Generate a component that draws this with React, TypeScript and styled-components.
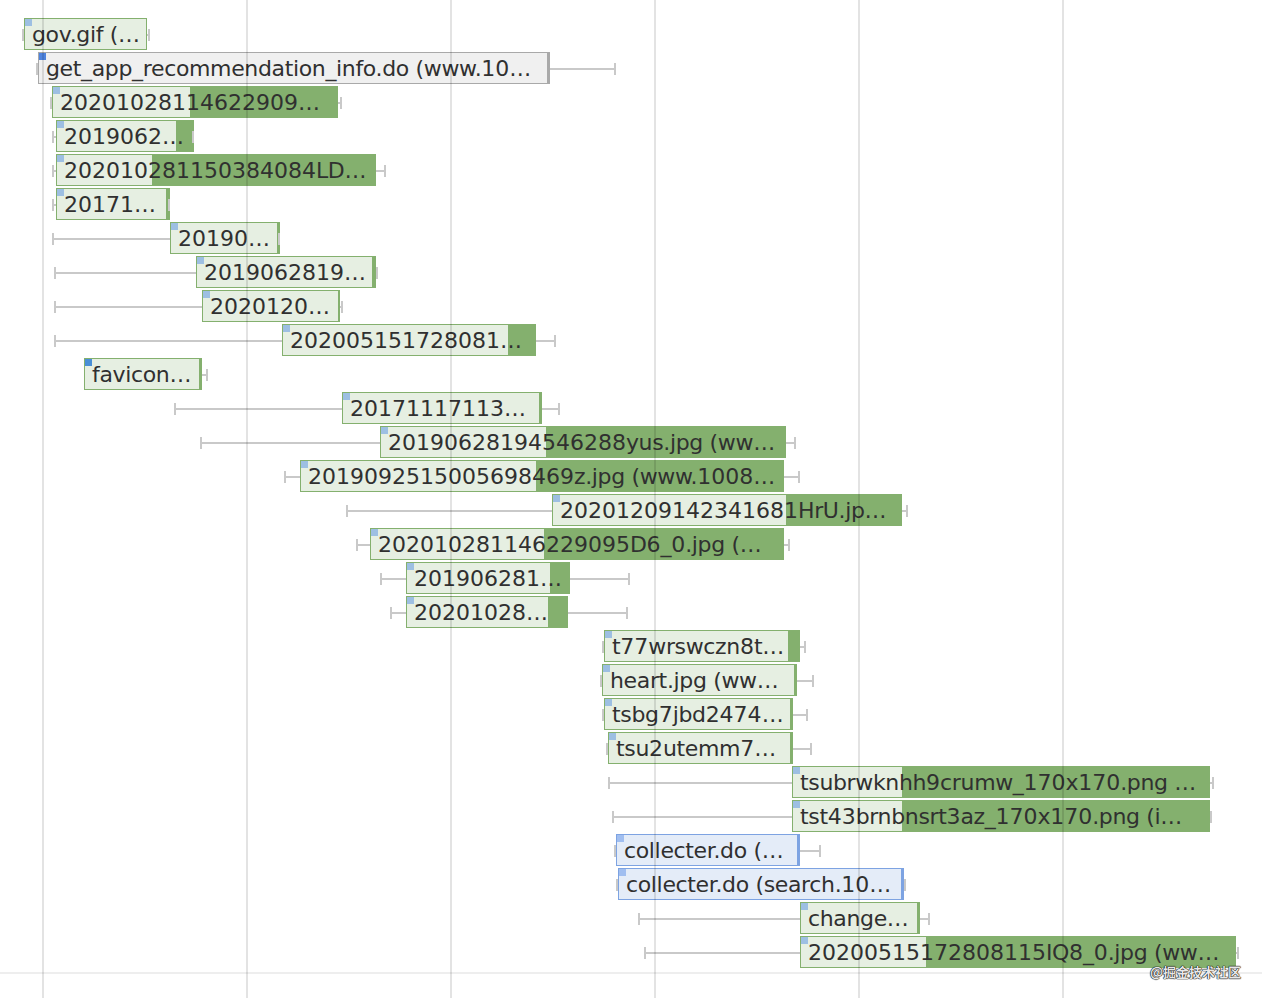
import React from 'react';
import styled, { createGlobalStyle } from 'styled-components';

type Kind = 'image' | 'xhr' | 'script' | 'icon';

interface Request {
  label: string;
  kind: Kind;
  start: number;
  bar: number;
  light: number;
  end: number;
  finish: number;
}

const palette = {
  image: { border: '#84b06e', fill: '#e6efe2', dark: '#84b06e', mark: '#9dbfe2' },
  icon: { border: '#84b06e', fill: '#e6efe2', dark: '#84b06e', mark: '#4a8fd6' },
  xhr: { border: '#a9a9a9', fill: '#f0f0f0', dark: '#a9a9a9', mark: '#4f84de' },
  script: { border: '#7da3e2', fill: '#e4ecf8', dark: '#7da3e2', mark: '#a0bef0' },
};

const requests: Request[] = [
  { label: 'gov.gif (…', kind: 'image', start: 22, bar: 24, light: 146, end: 147, finish: 150 },
  { label: 'get_app_recommendation_info.do (www.10…', kind: 'xhr', start: 36, bar: 38, light: 547, end: 550, finish: 616 },
  { label: '20201028114622909…', kind: 'image', start: 50, bar: 52, light: 190, end: 338, finish: 342 },
  { label: '2019062…', kind: 'image', start: 52, bar: 56, light: 176, end: 194, finish: 194 },
  { label: '202010281150384084LD…', kind: 'image', start: 52, bar: 56, light: 152, end: 376, finish: 386 },
  { label: '20171…', kind: 'image', start: 52, bar: 56, light: 166, end: 170, finish: 170 },
  { label: '20190…', kind: 'image', start: 52, bar: 170, light: 277, end: 280, finish: 280 },
  { label: '2019062819…', kind: 'image', start: 54, bar: 196, light: 372, end: 376, finish: 378 },
  { label: '2020120…', kind: 'image', start: 54, bar: 202, light: 338, end: 340, finish: 343 },
  { label: '202005151728081…', kind: 'image', start: 54, bar: 282, light: 508, end: 536, finish: 556 },
  { label: 'favicon…', kind: 'icon', start: 84, bar: 84, light: 199, end: 202, finish: 208 },
  { label: '20171117113…', kind: 'image', start: 174, bar: 342, light: 539, end: 542, finish: 560 },
  { label: '20190628194546288yus.jpg (ww…', kind: 'image', start: 200, bar: 380, light: 546, end: 786, finish: 796 },
  { label: '2019092515005698469z.jpg (www.1008…', kind: 'image', start: 284, bar: 300, light: 536, end: 784, finish: 800 },
  { label: '20201209142341681HrU.jp…', kind: 'image', start: 346, bar: 552, light: 786, end: 902, finish: 908 },
  { label: '202010281146229095D6_0.jpg (…', kind: 'image', start: 356, bar: 370, light: 544, end: 784, finish: 790 },
  { label: '201906281…', kind: 'image', start: 380, bar: 406, light: 550, end: 570, finish: 630 },
  { label: '20201028…', kind: 'image', start: 390, bar: 406, light: 548, end: 568, finish: 628 },
  { label: 't77wrswczn8t…', kind: 'image', start: 602, bar: 604, light: 788, end: 800, finish: 806 },
  { label: 'heart.jpg (ww…', kind: 'image', start: 600, bar: 602, light: 794, end: 797, finish: 814 },
  { label: 'tsbg7jbd2474…', kind: 'image', start: 602, bar: 604, light: 790, end: 793, finish: 808 },
  { label: 'tsu2utemm7…', kind: 'image', start: 606, bar: 608, light: 790, end: 793, finish: 812 },
  { label: 'tsubrwknhh9crumw_170x170.png …', kind: 'image', start: 608, bar: 792, light: 902, end: 1210, finish: 1214 },
  { label: 'tst43brnbnsrt3az_170x170.png (i…', kind: 'image', start: 612, bar: 792, light: 902, end: 1210, finish: 1212 },
  { label: 'collecter.do (…', kind: 'script', start: 614, bar: 616, light: 797, end: 800, finish: 821 },
  { label: 'collecter.do (search.10…', kind: 'script', start: 616, bar: 618, light: 901, end: 904, finish: 906 },
  { label: 'change…', kind: 'image', start: 638, bar: 800, light: 917, end: 920, finish: 930 },
  { label: '20200515172808115IQ8_0.jpg (ww…', kind: 'image', start: 644, bar: 800, light: 926, end: 1236, finish: 1239 },
];

const gridLines = [0, 1, 2, 3, 4, 5];

const GlobalStyle = createGlobalStyle`
  html, body {
    margin: 0;
    padding: 0;
    background: #fff;
  }
`;

const Chart = styled.div`
  position: relative;
  width: 1262px;
  height: 998px;
  overflow: hidden;
  font-family: 'DejaVu Sans', sans-serif;
`;

const Rows = styled.div`
  display: flex;
  flex-direction: column;
  gap: 2px;
  padding-top: 18px;
  height: 974px;
  box-sizing: border-box;
  border-bottom: 2px solid #eeeeee;
`;

const Row = styled.div<{ $offset: number }>`
  display: flex;
  align-items: center;
  flex: none;
  height: 32px;
  margin-left: ${({ $offset }) => $offset}px;
`;

const Whisker = styled.div<{ $width: number; $side: 'left' | 'right' }>`
  flex: none;
  box-sizing: border-box;
  width: ${({ $width }) => $width}px;
  height: 12px;
  margin-top: 2px;
  background: linear-gradient(#c9c9c9, #c9c9c9) center / 100% 2px no-repeat;
  border-${({ $side }) => $side}: 2px solid #c9c9c9;
`;

const Tick = styled.div<{ $back: number }>`
  flex: none;
  position: relative;
  width: 2px;
  height: 12px;
  margin-top: 2px;
  margin-left: ${({ $back }) => -$back}px;
  background: #c9c9c9;
`;

const Bar = styled.div<{ $width: number; $kind: Kind }>`
  flex: none;
  display: flex;
  width: ${({ $width }) => $width}px;
  height: 32px;
  background: ${({ $kind }) => palette[$kind].dark};
`;

const Label = styled.div<{ $width: number; $kind: Kind }>`
  flex: none;
  position: relative;
  box-sizing: border-box;
  width: ${({ $width }) => $width}px;
  height: 32px;
  padding-left: 7px;
  background: ${({ $kind }) => palette[$kind].fill};
  border: 1px solid ${({ $kind }) => palette[$kind].border};
  border-right: none;
  &::before {
    content: '';
    position: absolute;
    top: 0;
    left: 0;
    width: 7px;
    height: 7px;
    background: ${({ $kind }) => palette[$kind].mark};
  }
`;

const Text = styled.span`
  display: block;
  position: relative;
  font-size: 22px;
  line-height: 32px;
  color: #303030;
  white-space: nowrap;
`;

// letters run a bit narrower than the digits in this face
const Letters = styled.span`
  letter-spacing: -0.35px;
`;

const GridOverlay = styled.div`
  position: absolute;
  top: 0;
  left: 42px;
  bottom: 0;
  display: flex;
  gap: 202px;
  pointer-events: none;
`;

const GridLine = styled.div`
  width: 2px;
  height: 100%;
  background: rgba(0, 0, 0, 0.11);
`;

const Watermark = styled.div`
  position: absolute;
  right: 21px;
  top: 965px;
  font-family: 'Noto Sans CJK SC', sans-serif;
  font-size: 13px;
  font-weight: 700;
  line-height: 14px;
  color: #e8e8e8;
  text-shadow: 0 0 1px #000, 0 0 1px #000, 0 0 1px #000;
`;

const WaterfallRow: React.FC<{ request: Request }> = ({ request }) => {
  const { label, kind, start, bar, light, end, finish } = request;
  const parts = label.split(/(\d+)/);
  return (
    <Row $offset={start}>
      {bar > start && <Whisker $side="left" $width={bar - start} />}
      <Bar $kind={kind} $width={end - bar}>
        <Label $kind={kind} $width={light - bar}>
          <Text>
            {parts.map((part, i) =>
              i % 2 === 1 ? part : <Letters key={i}>{part}</Letters>
            )}
          </Text>
        </Label>
      </Bar>
      {finish - end > 2 ? (
        <Whisker $side="right" $width={finish - end} />
      ) : (
        <Tick $back={2 - (finish - end)} />
      )}
    </Row>
  );
};

export default function App() {
  return (
    <Chart>
      <GlobalStyle />
      <Rows>
        {requests.map((request) => (
          <WaterfallRow key={`${request.bar}-${request.label}`} request={request} />
        ))}
      </Rows>
      <GridOverlay>
        {gridLines.map((line) => (
          <GridLine key={line} />
        ))}
      </GridOverlay>
      <Watermark>@掘金技术社区</Watermark>
    </Chart>
  );
}
